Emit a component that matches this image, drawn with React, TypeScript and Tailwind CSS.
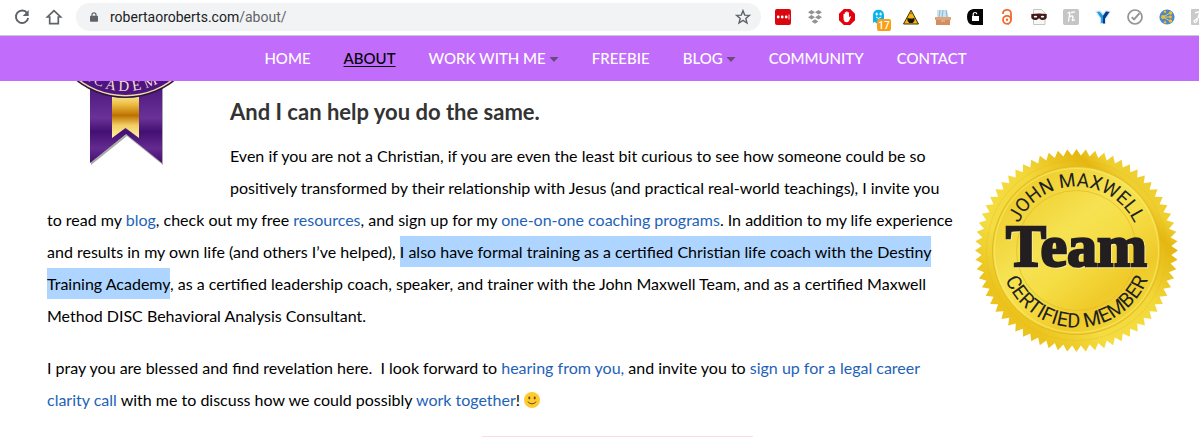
import type { ReactNode } from 'react'

const linkStyle = 'text-[#1e62b8]'

function Icon({ children, label }: { children: ReactNode; label: string }) {
    return (
        <button aria-label={label} className="h-4 w-4 shrink-0 cursor-pointer">
            <svg viewBox="0 0 16 16" className="h-4 w-4 overflow-visible">{children}</svg>
        </button>
    )
}

function Extensions() {
    return (
        <div className="-mr-2 ml-3.5 flex shrink-0 items-center gap-4">
            <Icon label="Passwords">
                <rect width="16" height="16" rx="2" fill="#d9070f" />
                <circle cx="3.2" cy="8" r="1.4" fill="#fff" />
                <circle cx="7.2" cy="8" r="1.4" fill="#fff" />
                <circle cx="11.2" cy="8" r="1.4" fill="#fff" />
                <path d="M14 5.5v5" stroke="#fff" strokeWidth="0.8" />
            </Icon>
            <Icon label="Dropbox">
                <path d="M4.5 1 8 3.3 4.5 5.6 1 3.3zM11.5 1 15 3.3 11.5 5.6 8 3.3zM4.5 6 8 8.3 4.5 10.6 1 8.3zM11.5 6 15 8.3 11.5 10.6 8 8.3zM8 10.3l3.4 2.2L8 14.7l-3.4-2.2z" fill="#909396" />
            </Icon>
            <Icon label="Ad blocker">
                <path d="M4.8 0h6.4L16 4.8v6.4L11.2 16H4.8L0 11.2V4.8z" fill="#e6000b" />
                <path d="M4.5 8.7V5.1q.7-.9 1.3 0V3.5q.8-.9 1.4 0v-.8q.8-.8 1.4 0v.9q.8-.8 1.4 0v4.6l1.2-.9q1.1-.2.7.6L10 12q-.8 1.3-2.4 1.3-3.1-.1-3.1-4.6z" fill="#fff" />
            </Icon>
            <Icon label="Tracker blocker">
                <path d="M2 14V6.2Q2.2.7 7.5.7T13 6.2V14l-2.2-1.5L9 14.4l-1.7-1.8-1.8 1.8-1.6-1.7L.8 14.5z" fill="#09b4ee" />
                <ellipse cx="5.7" cy="5.1" rx="1.1" ry="1.5" fill="#fff" />
                <ellipse cx="9.6" cy="5.1" rx="1.1" ry="1.5" fill="#fff" />
                <path d="M5 8q2.6 2.8 5.2 0" fill="none" stroke="#fff" />
                <rect x="6" y="10" width="14" height="12" rx="2" fill="#f99f16" />
                <text x="13" y="19.5" fontSize="10" fontFamily="Roboto, sans-serif" fontWeight="500" textAnchor="middle" fill="#fff">17</text>
            </Icon>
            <Icon label="Warnings">
                <path d="M8 1.2 15.5 15H.5z" fill="#f7b414" stroke="#3f2d08" strokeLinejoin="round" />
                <path d="M4.5 8.6 6 9.4h4l1.5-.8v3.2L9.7 14H6.3l-1.8-2.2z" fill="#181512" />
                <path d="m7 5 1-1.5L9 5z" fill="#76510a" />
            </Icon>
            <Icon label="File box">
                <path d="M2 1h10l2 8H2z" fill="#cbe4f1" />
                <path d="M5 1 4 8M8 1 7 8M11 1l1 7" stroke="#88b7d3" />
                <path d="M0 8h16v3H0z" fill="#dda47c" />
                <path d="M1 11h14v5H1z" fill="#d38d63" />
                <path d="M6 12h4" stroke="#f2c5a4" />
            </Icon>
            <Icon label="Unlock">
                <path d="M16 0v16H6Q0 15 0 8t6-8z" fill="#050505" />
                <rect x="5" y="7" width="7" height="5" fill="#fff" />
                <path d="M6.2 7V5.1Q6.3 3.5 8 3.5t1.8 1.6" fill="none" stroke="#fff" strokeWidth="1.2" />
            </Icon>
            <Icon label="Open access">
                <path d="M4 5V4.2a4 3.4 0 0 1 8 0V11" fill="none" stroke="#f26a2c" strokeWidth="1.8" />
                <circle cx="8" cy="10.8" r="4" fill="none" stroke="#f26a2c" strokeWidth="1.8" />
                <circle cx="8" cy="10.8" r="1.2" fill="#f26a2c" />
                <path d="M7 14h3v2z" fill="#f26a2c" />
            </Icon>
            <Icon label="Private mask">
                <path d="M2.5.5h8L14 4v11.5H2.5z" fill="#f7f7f7" stroke="#c5c5c5" />
                <path d="M.3 5q7.7-1 15.4 0v4q-1.6 2.7-5.7 1.8L8 9.3l-2 1.5Q1.9 11.7.3 9z" fill="#43191b" />
                <ellipse cx="4.5" cy="7.7" rx="1.7" ry="0.9" fill="#fff" />
                <ellipse cx="11.5" cy="7.7" rx="1.7" ry="0.9" fill="#fff" />
            </Icon>
            <Icon label="Honey">
                <rect width="16" height="16" rx="2" fill="#c5c5c5" />
                <path d="M5 4q2.5-2 1.6 1.5L5.5 12m.7-4q4-2.2 3.8.2L9.3 11q.2 1.5 2.2-.2M8.5 3.5l3-.7" fill="none" stroke="#fff" strokeWidth="1.3" strokeLinecap="round" />
            </Icon>
            <Icon label="Web of science">
                <path d="M1 2.500 5 2 8 5.500 11 2l4 .5-4.500 7v5h-5v-5z" fill="#1e9be0" stroke="#d3e7f4" strokeWidth="1.2" />
                <path d="M14.500 3 11 2.600 8 7v7.500h2V9.500z" fill="#073b91" />
            </Icon>
            <Icon label="Verify">
                <circle cx="8" cy="8" r="7" fill="none" stroke="#949494" strokeWidth="1.7" />
                <path d="m4.7 8.1 2.4 2.3 5.3-6" fill="none" stroke="#949494" strokeWidth="2" />
            </Icon>
            <Icon label="Network">
                <circle cx="8" cy="8" r="7.6" fill="#4d88ca" />
                <path d="M4 8l7-4M4 8l7 4M4 8h7" fill="none" stroke="#ecc852" />
                <g fill="#f2bd24">
                    <circle cx="4" cy="8" r="2" /><circle cx="11.5" cy="4" r="1.7" /><circle cx="11.5" cy="8" r="1.4" />
                    <circle cx="11.5" cy="12" r="1.7" /><circle cx="6" cy="2.8" r="1.2" /><circle cx="6" cy="13.3" r="1.2" />
                </g>
            </Icon>
            <Icon label="JSTOR">
                <rect width="16" height="16" rx="1" fill="#cacaca" />
                <path d="M4 4q4-2 4.5 0L6 12q-2 3-3 0l5-4" fill="none" stroke="#fff" strokeWidth="1.3" />
            </Icon>
        </div>
    )
}

function BrowserBar() {
    return (
        <header className="flex h-9 items-center border-b border-[#c9cacf] bg-white pb-0.5 pl-3.5">
            <div className="flex gap-4">
                <Icon label="Reload">
                    <path d="M13.2 4.2A6.2 6.2 0 1 0 14.2 9" fill="none" stroke="#5f6368" strokeWidth="1.9" />
                    <path d="M14.7 1v6H8.7z" fill="#5f6368" />
                </Icon>
                <Icon label="Home">
                    <path d="M8 1.6 1.4 8h2.3v6.7h8.6V8h2.3z" fill="none" stroke="#5f6368" strokeWidth="1.7" />
                </Icon>
            </div>
            <div className="ml-3.5 flex h-7 flex-1 items-center rounded-full bg-[#f1f3f4] pr-2.5 pl-3.5">
                <svg viewBox="0 0 10 12" className="h-3 w-2">
                    <path d="M2.5 5V3.3a2.5 2.5 0 0 1 5 0V5" fill="none" stroke="#5f6368" strokeWidth="1.5" />
                    <rect y="4.5" width="10" height="7.5" rx="1" fill="#5f6368" />
                </svg>
                <p className="ml-3 flex-1 font-['Roboto',sans-serif] text-sm text-[#202124]">
                    robertaoroberts.com<span className="text-[#5f6368]">/about/</span>
                </p>
                <Icon label="Bookmark">
                    <path d="m8 1.7 1.7 4.4 4.7.3-3.6 3 1.2 4.6-4-2.6L4 14l1.2-4.6-3.6-3 4.7-.3z" fill="none" stroke="#5f6368" strokeWidth="1.4" />
                </Icon>
            </div>
            <Extensions />
        </header>
    )
}

const menu = [
    { name: 'HOME' },
    { name: 'ABOUT', active: true },
    { name: 'WORK WITH ME', more: true },
    { name: 'FREEBIE' },
    { name: 'BLOG', more: true },
    { name: 'COMMUNITY' },
    { name: 'CONTACT' },
]

function Menu() {
    return (
        <nav className="flex h-[45px] items-center justify-center gap-[33px] bg-[#c16cfb] pl-8 text-[15px] font-medium text-white">
            {menu.map((item) => (
                <a key={item.name} href="#" className={item.active ? 'text-black underline underline-offset-2' : 'flex items-center'}>
                    {item.name}
                    {item.more && (
                        <svg viewBox="0 0 10 5" className="mt-0.5 ml-[3px] h-[5px] w-2.5">
                            <path d="M.5 0h9L5 5z" fill="#6b4a7e" />
                        </svg>
                    )}
                </a>
            ))}
        </nav>
    )
}

function Ribbon() {
    return (
        <svg viewBox="0 0 183 94" className="float-left h-[94px] w-[183px] overflow-hidden">
            <defs>
                <linearGradient id="purple" x1="0" y1="0" x2="0" y2="1">
                    <stop offset="0" stopColor="#47127a" />
                    <stop offset="0.45" stopColor="#6a3298" />
                    <stop offset="0.62" stopColor="#431071" />
                    <stop offset="0.82" stopColor="#642a90" />
                    <stop offset="1" stopColor="#431071" />
                </linearGradient>
                <linearGradient id="band" x1="0" y1="0" x2="0" y2="1">
                    <stop offset="0" stopColor="#fff3b5" />
                    <stop offset="0.25" stopColor="#edbd43" />
                    <stop offset="0.5" stopColor="#bd7200" />
                    <stop offset="0.72" stopColor="#f3ce65" />
                    <stop offset="1" stopColor="#fff0a4" />
                </linearGradient>
                <path id="medalArc" d="M6.5-62A72 72 0 0 0 150.5-62" />
            </defs>
            <path d="M43 0h72v83L79 54 43 83z" transform="translate(1 1)" fill="#aaa" />
            <path d="M43 0h72v82L79 53 43 82z" fill="url(#purple)" />
            <path d="M65 12h27v45L78.5 47 65 57z" fill="url(#band)" />
            <circle cx="78.5" cy="-62" r="79" fill="#2b1638" />
            <circle cx="78.5" cy="-62" r="77.5" fill="#f4d6ad" />
            <circle cx="78.5" cy="-62" r="76" fill="#4c1580" />
            <text fontFamily="Liberation Serif, serif" fontSize="15" fill="#f8ddd0" textAnchor="middle">
                <textPath href="#medalArc" startOffset="50%">A C A D E M Y</textPath>
            </text>
        </svg>
    )
}

const teeth = Array.from({ length: 136 }, (_, i) => {
    const r = i % 2 ? 95 : 101.5
    const a = (i * Math.PI) / 68
    return `${(Math.sin(a) * r).toFixed(2)},${(-Math.cos(a) * r).toFixed(2)}`
}).join(' ')

function Seal() {
    return (
        <svg viewBox="-101.5 -101.5 203 203" className="mt-[68px] h-[203px] w-[203px] shrink-0">
            <defs>
                <linearGradient id="outer" x1="0.2" y1="0.8" x2="0.8" y2="0.2">
                    <stop offset="0" stopColor="#ebc31c" />
                    <stop offset="0.25" stopColor="#f4dc41" />
                    <stop offset="0.6" stopColor="#f3d83a" />
                    <stop offset="0.9" stopColor="#e5b710" />
                    <stop offset="1" stopColor="#efcf30" />
                </linearGradient>
                <linearGradient id="inner" x1="0.1" y1="0" x2="0.9" y2="1">
                    <stop offset="0" stopColor="#ecc721" />
                    <stop offset="0.4" stopColor="#f6e252" />
                    <stop offset="0.55" stopColor="#f5dd44" />
                    <stop offset="0.75" stopColor="#efca29" />
                    <stop offset="1" stopColor="#f3dc43" />
                </linearGradient>
                <path id="topArc" d="M-64 0A64 64 0 0 1 64 0" />
                <path id="bottomArc" d="M-77 0A77 77 0 0 0 77 0" />
            </defs>
            <polygon points={teeth} fill="url(#outer)" />
            <circle r="90" fill="none" stroke="#dcb522" strokeWidth="0.6" strokeDasharray="1 1" />
            <circle r="84" fill="url(#inner)" stroke="#e3b922" />
            <circle r="82" fill="none" stroke="#f9ec75" strokeWidth="0.7" />
            <circle r="60" fill="none" stroke="#e3bd27" strokeWidth="0.8" />
            <g fill="#231f20" textAnchor="middle" fontFamily="Roboto, sans-serif">
                <text fontSize="19"><textPath href="#topArc" startOffset="50%">JOHN MAXWELL</textPath></text>
                <text fontSize="20"><textPath href="#bottomArc" startOffset="50%">CERTIFIED MEMBER</textPath></text>
                <text y="15" fontSize="60" fontFamily="Liberation Serif, serif" fontWeight="700" stroke="#231f20" strokeWidth="2.5" className="drop-shadow-[1px_1px_0_#f8ec96]">Team</text>
            </g>
        </svg>
    )
}

function Smile() {
    return (
        <svg viewBox="0 0 16 16" role="img" aria-label="smile" className="inline h-4 w-4 align-[-2px]">
            <circle cx="8" cy="8" r="8" fill="#fdcb2e" />
            <ellipse cx="5.3" cy="6" rx="1" ry="1.4" fill="#66471c" />
            <ellipse cx="10.7" cy="6" rx="1" ry="1.4" fill="#66471c" />
            <path d="M4 10q4 4 8 0" fill="none" stroke="#66471c" strokeLinecap="round" />
        </svg>
    )
}

export default function App() {
    return (
        <div className="overflow-hidden bg-white font-['Lato',sans-serif] text-black">
            <BrowserBar />
            <Menu />
            <main className="flex items-start gap-5 pr-[21px] pl-[47px]">
                <article className="min-w-0 flex-1 text-base leading-8">
                    <Ribbon />
                    <h2 className="pt-[15px] pb-3 text-[22px] leading-8 font-bold text-[#333]">And I can help you do the same.</h2>
                    <p className="mb-5">
                        Even if you are not a Christian, if you are even the least bit curious to see how someone could be so positively transformed by their relationship with Jesus (and practical real-world teachings), I invite you to read my <a href="#" className={linkStyle}>blog</a>, check out my free <a href="#" className={linkStyle}>resources</a>, and sign up for my <a href="#" className={linkStyle}>one-on-one coaching programs</a>. In addition to my life experience and results in my own life (and others I’ve helped), <mark className="bg-[#add5ff] py-1.5 text-black">I also have formal training as a certified Christian life coach with the Destiny Training Academy</mark>, as a certified leadership coach, speaker, and trainer with the John Maxwell Team, and as a certified Maxwell Method DISC Behavioral Analysis Consultant.
                    </p>
                    <p>
                        I pray you are blessed and find revelation here.&nbsp; I look forward to <a href="#" className={linkStyle}>hearing from you,</a> and invite you to <a href="#" className={linkStyle}>sign up for a legal career clarity call</a> with me to discuss how we could possibly <a href="#" className={linkStyle}>work together</a>! <Smile />
                    </p>
                </article>
                <Seal />
            </main>
            <footer className="flex justify-center pt-5 pl-9">
                <div className="h-px w-[271px] bg-[#fadce6]" />
            </footer>
        </div>
    )
}
